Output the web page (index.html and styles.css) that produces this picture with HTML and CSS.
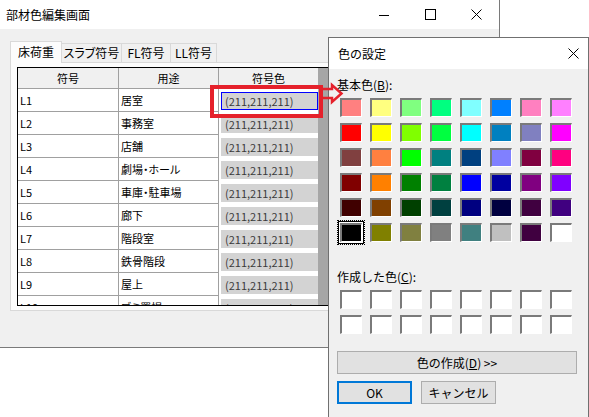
FILE: index.html
```html
<!DOCTYPE html>
<html lang="ja">
<head>
<meta charset="utf-8">
<title>部材色編集画面</title>
<link rel="stylesheet" href="styles.css">
</head>
<body>
<div class="win main">
  <div class="titlebar">
    <span class="title">部材色編集画面</span>
    <div class="caps">
      <span class="cap"><svg width="10" height="10" viewBox="0 0 10 10"><line x1="0" y1="5.5" x2="10" y2="5.5" stroke="#000" stroke-width="1"/></svg></span>
      <span class="cap"><svg width="11" height="11" viewBox="0 0 11 11"><rect x="0.5" y="0.5" width="10" height="10" fill="none" stroke="#000" stroke-width="1"/></svg></span>
      <span class="cap"><svg width="11" height="11" viewBox="0 0 11 11"><path d="M0.5 0.5 L10.5 10.5 M10.5 0.5 L0.5 10.5" stroke="#000" stroke-width="1"/></svg></span>
    </div>
  </div>
  <div class="client">
    <div class="tabs">
      <div class="tab active t1">床荷重</div>
      <div class="tab t2">スラブ符号</div>
      <div class="tab t3">FL符号</div>
      <div class="tab t4">LL符号</div>
    </div>
    <div class="panel">
      <div class="gridwrap">
        <div class="grid">
          <div class="hd">符号</div><div class="hd">用途</div><div class="hd last">符号色</div>
          <div class="c">L1</div><div class="c">居室</div><div class="cc sel"><span>(211,211,211)</span></div>
          <div class="c">L2</div><div class="c">事務室</div><div class="cc"><span>(211,211,211)</span></div>
          <div class="c">L3</div><div class="c">店舗</div><div class="cc"><span>(211,211,211)</span></div>
          <div class="c">L4</div><div class="c">劇場・ホール</div><div class="cc"><span>(211,211,211)</span></div>
          <div class="c">L5</div><div class="c">車庫・駐車場</div><div class="cc"><span>(211,211,211)</span></div>
          <div class="c">L6</div><div class="c">廊下</div><div class="cc"><span>(211,211,211)</span></div>
          <div class="c">L7</div><div class="c">階段室</div><div class="cc"><span>(211,211,211)</span></div>
          <div class="c">L8</div><div class="c">鉄骨階段</div><div class="cc"><span>(211,211,211)</span></div>
          <div class="c">L9</div><div class="c">屋上</div><div class="cc"><span>(211,211,211)</span></div>
          <div class="c">L10</div><div class="c">ゴミ置場</div><div class="cc"><span>(211,211,211)</span></div>
        </div>
        <div class="vscroll"></div>
      </div>
    </div>
  </div>
</div>

<div class="redbox"></div>

<div class="win dlg">
  <div class="dtitle">
    <span class="t">色の設定</span>
    <svg class="dclose" width="11" height="11" viewBox="0 0 11 11"><path d="M0.5 0.5 L10.5 10.5 M10.5 0.5 L0.5 10.5" stroke="#000" stroke-width="1"/></svg>
  </div>
  <div class="dbody">
    <div class="lbl">基本色(<u>B</u>):</div>
    <div class="sw basic">
      <div class="s" style="background:#ff8080"></div><div class="s" style="background:#ffff80"></div><div class="s" style="background:#80ff80"></div><div class="s" style="background:#00ff80"></div><div class="s" style="background:#80ffff"></div><div class="s" style="background:#0080ff"></div><div class="s" style="background:#ff80c0"></div><div class="s" style="background:#ff80ff"></div>
      <div class="s" style="background:#ff0000"></div><div class="s" style="background:#ffff00"></div><div class="s" style="background:#80ff00"></div><div class="s" style="background:#00ff40"></div><div class="s" style="background:#00ffff"></div><div class="s" style="background:#0080c0"></div><div class="s" style="background:#8080c0"></div><div class="s" style="background:#ff00ff"></div>
      <div class="s" style="background:#804040"></div><div class="s" style="background:#ff8040"></div><div class="s" style="background:#00ff00"></div><div class="s" style="background:#008080"></div><div class="s" style="background:#004080"></div><div class="s" style="background:#8080ff"></div><div class="s" style="background:#800040"></div><div class="s" style="background:#ff0080"></div>
      <div class="s" style="background:#800000"></div><div class="s" style="background:#ff8000"></div><div class="s" style="background:#008000"></div><div class="s" style="background:#008040"></div><div class="s" style="background:#0000ff"></div><div class="s" style="background:#0000a0"></div><div class="s" style="background:#800080"></div><div class="s" style="background:#8000ff"></div>
      <div class="s" style="background:#400000"></div><div class="s" style="background:#804000"></div><div class="s" style="background:#004000"></div><div class="s" style="background:#004040"></div><div class="s" style="background:#000080"></div><div class="s" style="background:#000040"></div><div class="s" style="background:#400040"></div><div class="s" style="background:#400080"></div>
      <div class="s focus" style="background:#000000"></div><div class="s" style="background:#808000"></div><div class="s" style="background:#808040"></div><div class="s" style="background:#808080"></div><div class="s" style="background:#408080"></div><div class="s" style="background:#c0c0c0"></div><div class="s" style="background:#400040"></div><div class="s" style="background:#ffffff"></div>
    </div>
    <div class="lbl lbl2">作成した色(<u>C</u>):</div>
    <div class="sw custom">
      <div class="s"></div><div class="s"></div><div class="s"></div><div class="s"></div><div class="s"></div><div class="s"></div><div class="s"></div><div class="s"></div>
      <div class="s"></div><div class="s"></div><div class="s"></div><div class="s"></div><div class="s"></div><div class="s"></div><div class="s"></div><div class="s"></div>
    </div>
    <div class="btn big">色の作成(<u>D</u>) &gt;&gt;</div>
    <div class="btnrow">
      <div class="btn def">OK</div>
      <div class="btn">キャンセル</div>
    </div>
  </div>
</div>

<svg class="arrow" width="28" height="24" viewBox="0 0 28 24"><polyline points="3,7 14,7 14,3 23.5,11.5 14,20 14,16 3,16" fill="none" stroke="#e5212b" stroke-width="2.5" stroke-linejoin="miter"/></svg>
</body>
</html>
```

FILE: styles.css
```css
* { box-sizing: border-box; }
html, body { margin: 0; padding: 0; }
body {
  width: 589px;
  height: 417px;
  overflow: hidden;
  position: relative;
  background: #ffffff;
  font-family: "Noto Sans CJK JP", "Noto Sans", sans-serif;
  font-size: 12px;
  color: #000;
}
u { text-decoration: underline; text-underline-offset: 1px; }

.win { position: absolute; }

/* main window */
.main {
  left: 0;
  top: 0;
  width: 500px;
  height: 348px;
  background: #f0f0f0;
  border-right: 1px solid #7a7a7a;
  border-bottom: 1px solid #7a7a7a;
  display: flex;
  flex-direction: column;
  z-index: 1;
}
.titlebar {
  flex: none;
  height: 29px;
  background: #fff;
  display: flex;
  align-items: center;
}
.title { flex: 1; padding-left: 6px; line-height: 16px; }
.caps { display: flex; height: 29px; }
.cap {
  width: 46px;
  height: 29px;
  display: flex;
  align-items: center;
  justify-content: center;
}
.client { flex: 1; padding: 12px 0 0 10px; }

.tabs {
  display: flex;
  align-items: flex-end;
  height: 21px;
  position: relative;
  z-index: 2;
}
.tab {
  height: 19px;
  border: 1px solid #d9d9d9;
  border-bottom: none;
  background: #f0f0f0;
  margin-left: -1px;
  display: flex;
  align-items: center;
  justify-content: center;
  line-height: 16px;
  font-size: 12px;
  white-space: nowrap;
  font-feature-settings: "palt";
}
.tab.active {
  height: 22px;
  margin-left: 0;
  margin-bottom: -1px;
  background: #fcfcfc;
  padding-bottom: 2px;
}
.t1 { width: 52px; }
.t2 { width: 61px; }
.t3 { width: 50px; }
.t4 { width: 47px; }

.panel {
  width: 480px;
  height: 249px;
  border: 1px solid #d9d9d9;
  background: #fcfcfc;
  padding: 4px 0 0 6px;
  position: relative;
  z-index: 1;
}
.gridwrap {
  display: flex;
  width: 330px;
  height: 239px;
  border: 1px solid #000;
  overflow: hidden;
  background: #fff;
}
.grid {
  flex: none;
  display: grid;
  grid-template-columns: 101px 100px 99px;
  grid-template-rows: 21px;
  grid-auto-rows: 23px;
  align-content: start;
  font-size: 11px;
}
.hd {
  background: #f0f0f0;
  border-right: 1px solid #a0a0a0;
  border-bottom: 1px solid #a0a0a0;
  text-align: center;
  line-height: 20px;
}
.hd.last { border-right: none; }
.c {
  background: #fff;
  border-right: 1px solid #a0a0a0;
  border-bottom: 1px solid #a0a0a0;
  padding-left: 2px;
  line-height: 22px;
  white-space: nowrap;
  overflow: hidden;
  font-feature-settings: "palt";
}
.cc { background: #fff; padding: 3px 0 2px 2px; }
.cc span {
  display: block;
  height: 18px;
  background: #d3d3d3;
  color: #3a3a3a;
  padding-left: 4px;
  line-height: 18px;
}
.cc.sel span {
  border: 1px solid #0000ff;
  padding-left: 3px;
  line-height: 16px;
}
.vscroll { flex: none; width: 17px; background: #a6a6a6; }

/* annotation */
.redbox {
  position: absolute;
  left: 210px;
  top: 85px;
  width: 113px;
  height: 33px;
  border: 4px solid #e5212b;
  z-index: 5;
}
.arrow {
  position: absolute;
  left: 318px;
  top: 82px;
  z-index: 20;
}

/* color dialog */
.dlg {
  left: 328px;
  top: 37px;
  width: 261px;
  height: 390px;
  border: 1px solid #707070;
  background: #f0f0f0;
  display: flex;
  flex-direction: column;
  z-index: 10;
}
.dtitle {
  flex: none;
  height: 31px;
  background: #fff;
  display: flex;
  align-items: center;
  padding-left: 9px;
}
.dtitle .t { flex: 1; line-height: 16px; }
.dclose { margin-right: 9px; }
.dbody {
  display: flex;
  flex-direction: column;
  align-items: flex-start;
  padding: 8px 0 0 8px;
}
.lbl { height: 16px; line-height: 16px; }
.lbl2 { margin-top: 27px; }
.sw {
  display: grid;
  grid-template-columns: repeat(8, 22px);
  grid-auto-rows: 19px;
  column-gap: 8px;
  row-gap: 6px;
  margin: 5px 0 0 3px;
}
.s {
  border-style: solid;
  border-width: 2px 1px 1px 2px;
  border-color: #7a7a7a #ffffff #ffffff #7a7a7a;
  background: #fff;
}
.s.focus {
  box-shadow: 0 0 0 1px #fff, 0 0 0 2px #000;
  outline: 1px dotted #000;
  outline-offset: 2px;
}
.btn {
  width: 75px;
  height: 23px;
  background: #e1e1e1;
  border: 1px solid #adadad;
  display: flex;
  align-items: center;
  justify-content: center;
  line-height: 16px;
}
.btn.big { width: 240px; margin-top: 17px; }
.btn.def { border: 2px solid #0078d7; }
.btnrow { display: flex; gap: 9px; margin-top: 7px; }
```
